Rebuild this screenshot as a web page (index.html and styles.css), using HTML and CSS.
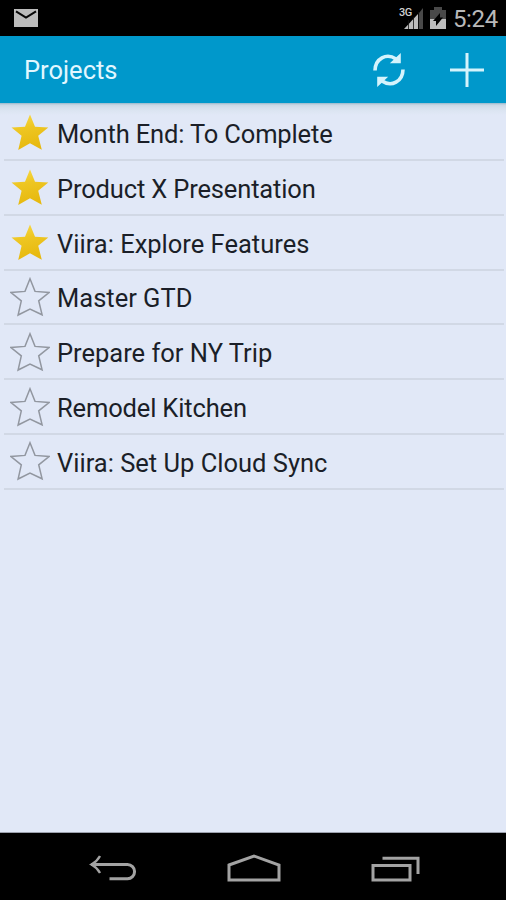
FILE: index.html
```html
<!DOCTYPE html>
<html lang="en">
<head>
<meta charset="utf-8">
<title>Projects</title>
<link rel="stylesheet" href="styles.css">
</head>
<body>
<svg class="defs" width="0" height="0" aria-hidden="true">
  <defs>
    <linearGradient id="gold" x1="0" y1="0" x2="0.25" y2="1">
      <stop offset="0" stop-color="#f8dc4c"/>
      <stop offset="0.45" stop-color="#eec622"/>
      <stop offset="1" stop-color="#e7b90f"/>
    </linearGradient>
    <symbol id="star-on" viewBox="0 0 40 40">
      <path fill="url(#gold)" d="M20 2.500 25 14.700 38.300 15.400 28.200 23.800 31.800 37.700 20 31.300 8.200 38 11.600 23.800 1.500 15.400 15 14.700Z"/>
    </symbol>
    <symbol id="star-off" viewBox="0 0 40 40">
      <path fill="none" stroke="#9297a0" stroke-width="1.500" d="M20 1.800 25 14.400 39 15.500 28.700 23.800 32.100 37.800 20 32 8.100 38 11.300 23.800 1 15.500 15 14.400Z"/>
    </symbol>
  </defs>
</svg>
<div class="phone">
  <div class="status">
    <svg class="mail" width="24" height="18" viewBox="0 0 24 18"><path fill="#bcbcbc" d="M0 0h24v18H0z"/><path fill="none" stroke="#080808" stroke-width="2" d="M2 2.300 12 8.500 22 2.300"/></svg>
    <div class="indicators">
      <div class="signal">
        <svg width="26" height="24" viewBox="0 0 26 24"><path fill="#bdbdbd" d="M5 23 19 8v15z"/><path fill="#494949" d="M20 7 24 2v21h-4z"/><path stroke="#111" stroke-width=".8" d="M9.500 14v9M14.500 11v12M19.500 6v17"/></svg>
        <span class="network">3G</span>
      </div>
      <svg class="battery" width="16" height="24" viewBox="0 0 16 24"><path fill="#494949" d="M0 4h4V1h8v3h4v9H0z"/><path fill="#bdbdbd" d="M0 13h16v10H0z"/><path fill="#000" d="M10 7v4.500h3L6 20v-5H3z"/></svg>
      <span class="clock">5:24</span>
    </div>
  </div>
  <header class="bar">
    <h1>Projects</h1>
    <svg class="sync" width="34" height="34" viewBox="0 0 34 34"><g fill="none" stroke="#d5f3fc" stroke-width="3.600"><path d="M3 17.500C3.200 5.500 14.500-.5 24 6"/><path d="M31 16.500C30.800 28.500 19.500 34.500 10 28"/></g><path fill="#d5f3fc" d="M28.800 0v10.200H17.800zM5.200 34V23.800H16.200z"/></svg>
    <svg class="plus" width="34" height="34" viewBox="0 0 34 34"><path fill="none" stroke="#d5f3fc" stroke-width="3" d="M17 0v34M0 17h34"/></svg>
  </header>
  <main class="content">
    <ul class="projects">
      <li><svg class="star"><use href="#star-on"/></svg><span class="title tight">Month End: To Complete</span></li>
      <li><svg class="star"><use href="#star-on"/></svg><span class="title tight">Product X Presentation</span></li>
      <li><svg class="star"><use href="#star-on"/></svg><span class="title">Viira: Explore Features</span></li>
      <li><svg class="star"><use href="#star-off"/></svg><span class="title">Master GTD</span></li>
      <li><svg class="star"><use href="#star-off"/></svg><span class="title">Prepare for NY Trip</span></li>
      <li><svg class="star"><use href="#star-off"/></svg><span class="title tight">Remodel Kitchen</span></li>
      <li><svg class="star"><use href="#star-off"/></svg><span class="title">Viira: Set Up Cloud Sync</span></li>
    </ul>
  </main>
  <nav class="nav">
    <svg class="back" width="48" height="28" viewBox="0 0 48 28"><g fill="none" stroke="#a3a3a3"><path stroke-width="3" d="M2 10.500h36.500a7 7 0 0 1 0 14.200H20.500"/><path stroke-width="2.400" d="M11 2Q8 7.500 2.500 10.500 8 13.500 11 19"/></g></svg>
    <svg class="home" width="54" height="29" viewBox="0 0 54 29"><path fill="none" stroke="#a3a3a3" stroke-width="3" d="M2 11 27 2 52 11v15H2z"/></svg>
    <svg class="recent" width="50" height="28" viewBox="0 0 50 28"><path fill="none" stroke="#a3a3a3" stroke-width="3" d="M2 10.500h37v14.500H2zM11.500 3.300h35.500V19"/></svg>
  </nav>
</div>
</body>
</html>
```

FILE: styles.css
```css
* { box-sizing: border-box; }
body { margin: 0; background: #000; font-family: Roboto, "Liberation Sans", sans-serif; }
.defs { position: absolute; }
svg { display: block; flex: none; }
.phone { display: flex; flex-direction: column; width: 506px; height: 900px; overflow: hidden; }
.status { display: flex; justify-content: space-between; height: 36px; padding: 9px 8px 0 14px; background: #000; }
.indicators { display: flex; margin-top: -3px; }
.signal { position: relative; width: 26px; margin-right: 5px; }
.network { position: absolute; left: 0; top: 1px; color: #d0d0d0; font-size: 11px; line-height: 12px; font-weight: 500; letter-spacing: -0.5px; }
.battery { margin-right: 7px; }
.clock { color: #b9b9b9; font-size: 24px; line-height: 26px; letter-spacing: -0.3px; }
.bar { display: flex; align-items: flex-start; height: 67px; padding: 17px 22px 0 24px; background: #0098cb; }
.bar h1 { margin: 0; flex: 1; color: #e2f7ff; font-size: 25.500px; line-height: 35px; font-weight: 400; }
.sync { margin-right: 44px; }
.content { flex: 1; padding-top: 3px; background: linear-gradient(#98b8ca 0, #cbd8e5 2px, #d6e0ed 5px, #dce5f2 8px, #e1e8f7 12px); border-bottom: 1px solid #9ca1ad; }
.projects { list-style: none; margin: 0; padding: 0 2px 0 4px; }
.projects li { display: flex; align-items: center; height: 54.850px; padding-left: 6px; border-bottom: 2px solid #d1d8e5; color: #1b1f28; font-size: 25.500px; line-height: 32px; white-space: nowrap; }
.title { margin-top: 3px; }
.tight { letter-spacing: -0.150px; }
.star { width: 40px; height: 40px; margin-right: 7px; }
.nav { display: flex; align-items: flex-start; height: 67px; padding: 21px 85px 0 89px; background: #000; }
.home { margin-left: 90px; }
.recent { margin-left: 90px; margin-top: 1px; }
```
